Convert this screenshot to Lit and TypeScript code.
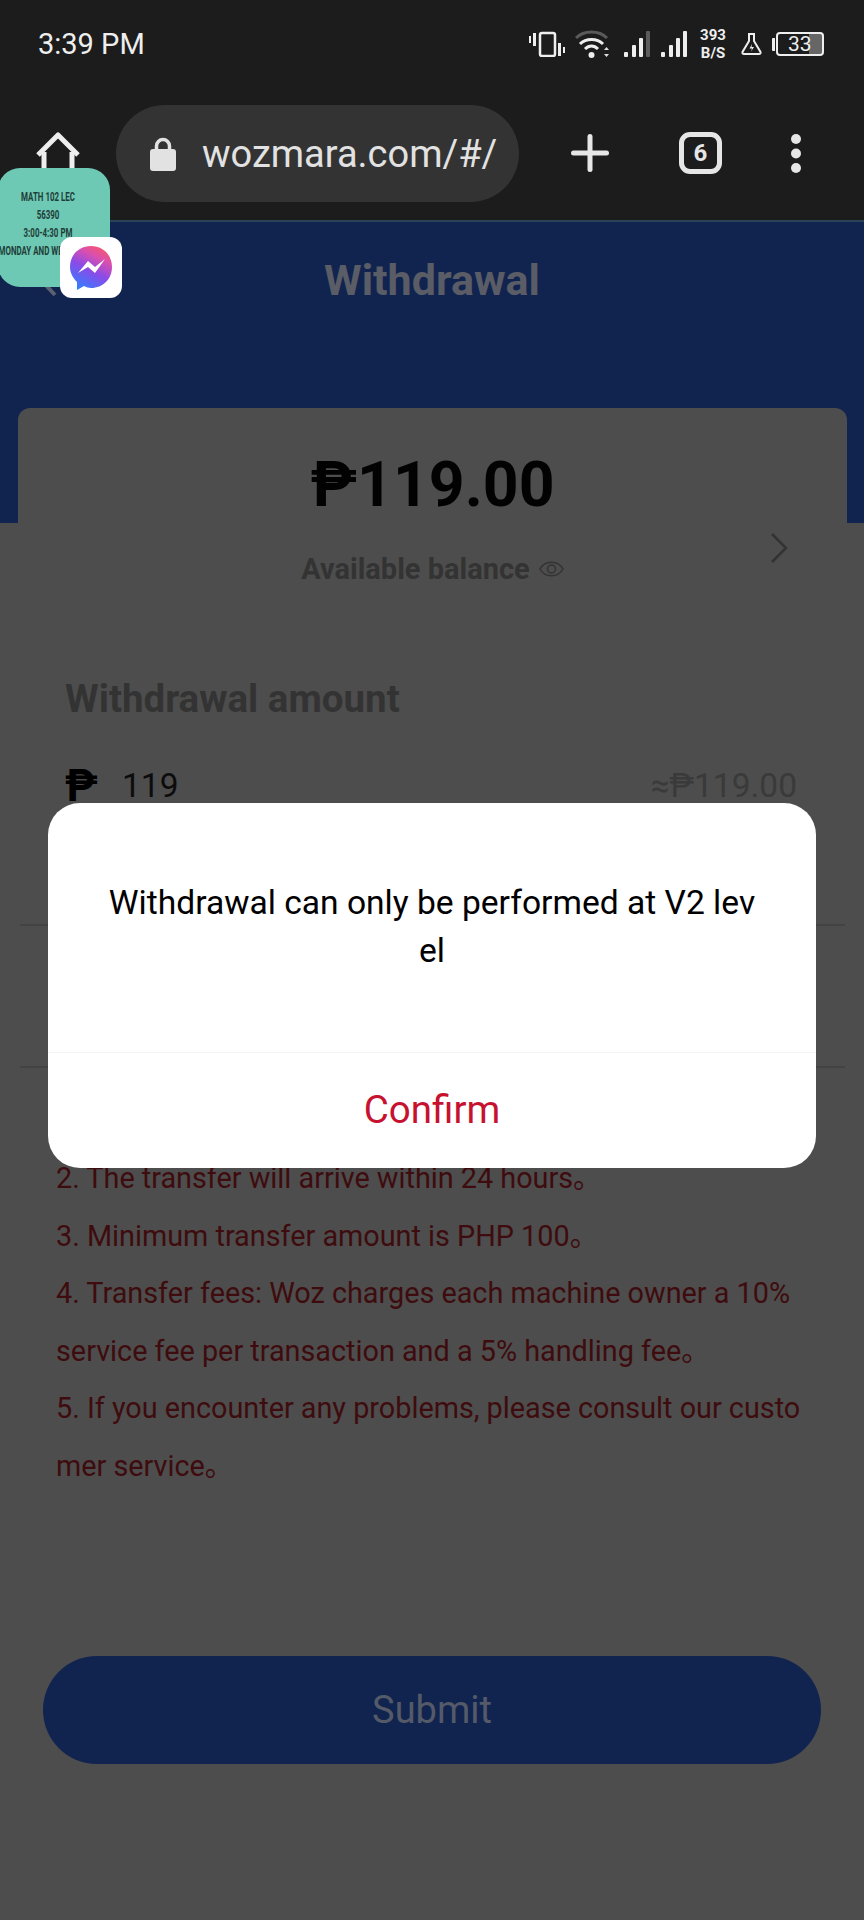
import { LitElement, html, css } from "lit";
import { customElement } from "lit/decorators.js";

const RULES = [
  "2. The transfer will arrive within 24 hours。",
  "3. Minimum transfer amount is PHP 100。",
  "4. Transfer fees: Woz charges each machine owner a 10% service fee per transaction and a 5% handling fee。",
  "5. If you encounter any problems, please consult our customer service。",
];

const signal = (lastBar: string) => html`
  <svg width="27" height="26" viewBox="0 0 27 26">
    <rect x="0" y="21" width="4" height="5" rx="1" fill="#eee"></rect>
    <rect x="8" y="14" width="4" height="12" rx="1" fill="#eee"></rect>
    <rect x="15" y="7" width="4" height="19" rx="1" fill="#eee"></rect>
    <rect x="22" y="0" width="4" height="26" rx="1" fill="${lastBar}"></rect>
  </svg>
`;

@customElement("app-root")
export class AppRoot extends LitElement {
  static styles = css`
    :host {
      display: block;
      width: 864px;
      height: 1920px;
      position: relative;
      overflow: hidden;
      background: #4d4d4d;
      font-family: Roboto, "Liberation Sans", "Noto Sans CJK JP", sans-serif;
    }

    svg {
      display: block;
      flex: none;
    }

    .chrome {
      height: 220px;
      background: #1c1c1c;
      border-bottom: 2px solid #2b4358;
    }

    .status {
      height: 88px;
      display: flex;
      align-items: center;
      padding: 0 40px 0 38px;
      color: #eee;
    }

    .time {
      font-size: 29px;
      line-height: 88px;
      flex: 1;
    }

    .speed {
      width: 26px;
      margin: 0 15px 0 12px;
      font-size: 15px;
      font-weight: 700;
      line-height: 18px;
      text-align: center;
      white-space: nowrap;
    }

    .status-icons {
      display: flex;
      align-items: center;
    }

    .gap-15 {
      width: 15px;
    }

    .gap-10 {
      width: 10px;
    }

    .wifi {
      margin-left: 10px;
    }

    .battery {
      display: flex;
      align-items: center;
      margin-left: 10px;
    }

    .battery-nub {
      width: 3px;
      height: 13px;
      background: #eee;
      border-radius: 1px 0 0 1px;
      margin-right: 1px;
    }

    .battery-body {
      width: 48px;
      height: 24px;
      box-sizing: border-box;
      border: 2px solid #eee;
      border-radius: 4px;
      font-size: 21px;
      line-height: 20px;
      padding-left: 10px;
      background: linear-gradient(to right, transparent 70%, #666 70%);
    }

    .toolbar {
      height: 132px;
      display: flex;
      align-items: flex-start;
    }

    .home {
      margin: 44px 0 0 36px;
    }

    .pill {
      width: 403px;
      height: 97px;
      margin: 17px 0 0 36px;
      box-sizing: border-box;
      padding-left: 34px;
      display: flex;
      align-items: center;
      gap: 26px;
      border-radius: 49px;
      background: #333333;
      color: #e2e2e2;
      font-size: 38px;
      white-space: nowrap;
    }

    .plus {
      margin: 46px 0 0 52px;
    }

    .tabs {
      width: 43px;
      height: 42px;
      margin: 44px 0 0 70px;
      box-sizing: border-box;
      border: 5px solid #e6e6e6;
      border-radius: 11px;
      color: #e6e6e6;
      font-size: 24px;
      font-weight: 700;
      line-height: 32px;
      text-align: center;
    }

    .dots {
      margin: 46px 0 0 69px;
    }

    .hero {
      height: 301px;
      box-sizing: border-box;
      padding-top: 35px;
      background: #112450;
      display: grid;
      grid-template-columns: 1fr auto 1fr;
      align-items: center;
      align-content: start;
      color: #5a5c66;
    }

    .back {
      margin-left: 38px;
    }

    .title {
      margin: 0;
      font-size: 43px;
      font-weight: 700;
      line-height: 46px;
    }

    /* the page sits under the dialog's dim layer, colours are the dimmed ones */
    .card {
      margin: -115px 17px 0 18px;
      padding-top: 41px;
      border-radius: 12px 12px 0 0;
      background: #4d4d4d;
      display: grid;
      grid-template-columns: 1fr auto 1fr;
      row-gap: 13px;
    }

    .total {
      grid-column: 2;
      color: #020202;
      font-size: 62.500px;
      font-weight: 700;
      line-height: 72px;
      text-align: center;
    }

    .balance {
      grid-column: 2;
      grid-row: 2;
      padding-top: 17px;
      display: flex;
      justify-content: center;
      align-items: center;
      gap: 9px;
      color: #333;
      font-size: 29px;
      font-weight: 700;
      line-height: 36px;
    }

    .more {
      grid-column: 3;
      grid-row: 2;
      justify-self: end;
      margin: -1px 59px 0 0;
    }

    .form {
      padding: 90px 67px 0 65px;
    }

    .form-title {
      margin: 0;
      color: #333;
      font-size: 38.500px;
      font-weight: 700;
      line-height: 44px;
    }

    .amount-row {
      margin-top: 43px;
      display: flex;
      align-items: center;
      font-size: 33.500px;
      line-height: 44px;
    }

    .peso {
      width: 57px;
      color: #000;
      font-size: 44px;
      font-weight: 700;
    }

    .value {
      flex: 1;
      color: #0c0c0c;
    }

    .approx {
      color: #3a3a3a;
    }

    .rule {
      height: 140px;
      margin: 116px 19px 0 20px;
      border-top: 2px solid #434343;
      border-bottom: 2px solid #434343;
    }

    .notes {
      margin: 82px 56px 0 56px;
      color: #3e0c0e;
      font-size: 28.800px;
      line-height: 57.600px;
      word-break: break-all;
    }

    .notes p {
      margin: 0;
    }

    .submit {
      height: 108px;
      margin: 160px 43px 0 43px;
      border-radius: 54px;
      background: #112450;
      color: #545a68;
      font-size: 38px;
      line-height: 108px;
      text-align: center;
    }

    .dialog {
      position: absolute;
      left: 48px;
      top: 803px;
      width: 768px;
      height: 365px;
      border-radius: 32px;
      background: #fff;
      display: flex;
      flex-direction: column;
    }

    .message {
      height: 250px;
      box-sizing: border-box;
      padding: 76px 56px 0;
      color: #000;
      font-size: 33.600px;
      line-height: 48px;
      text-align: center;
      word-break: break-all;
      border-bottom: 1px solid #f3f3f3;
    }

    .confirm {
      flex: 1;
      display: flex;
      align-items: center;
      justify-content: center;
      padding-bottom: 2px;
      color: #c6122f;
      font-size: 38.500px;
    }

    .note-bubble {
      position: absolute;
      left: -2px;
      top: 168px;
      width: 112px;
      height: 119px;
      box-sizing: border-box;
      padding: 20px 12px 0 0;
      border-radius: 22px;
      overflow: hidden;
      background: #6ec9b4;
      color: #1f3d38;
      font-size: 12px;
      font-weight: 700;
      line-height: 18px;
      text-align: center;
      white-space: nowrap;
    }

    .note-bubble div {
      display: flex;
      justify-content: center;
      transform: scaleX(0.66);
    }

    .messenger {
      position: absolute;
      left: 60px;
      top: 237px;
      width: 62px;
      height: 61px;
      border-radius: 12px;
      background: #fff;
      display: flex;
      align-items: center;
      justify-content: center;
    }
  `;

  render() {
    return html`
      <div class="chrome">
        <div class="status">
          <div class="time">3:39 PM</div>
          <div class="status-icons">
            <svg width="36" height="26" viewBox="0 0 36 26" fill="none">
              <rect x="0" y="5" width="2" height="7" fill="#eee"></rect>
              <rect x="4" y="2" width="3" height="13" fill="#eee"></rect>
              <rect x="11" y="2" width="15" height="23" rx="2" stroke="#eee" stroke-width="2.500"></rect>
              <rect x="29" y="12" width="3" height="13" fill="#eee"></rect>
              <rect x="34" y="16" width="2" height="6" fill="#eee"></rect>
            </svg>
            <svg class="wifi" width="34" height="28" viewBox="0 0 34 28" fill="none">
              <path d="M1 8 C9 0 24 0 32 8" stroke="#5a5a5a" stroke-width="3"></path>
              <path d="M5 14 C11 8 22 8 28 14" stroke="#eee" stroke-width="3"></path>
              <path d="M10 19 C14 15 19 15 23 19" stroke="#eee" stroke-width="3"></path>
              <circle cx="16.500" cy="25" r="3" fill="#eee"></circle>
              <path d="M29 20 l2.500 -3 l2.500 3 z M29 24 l2.500 3 l2.500 -3 z" fill="#ddd"></path>
            </svg>
            <span class="gap-15"></span>
            ${signal("#5c5c5c")}
            <span class="gap-10"></span>
            ${signal("#eee")}
          </div>
          <div class="speed">393<br />B/S</div>
          <svg width="21" height="22" viewBox="0 0 21 22" fill="none">
            <path d="M7 1 H14 M8 1 V8 L1.500 19 Q1 21 3 21 H18 Q20 21 19.500 19 L13 8 V1" stroke="#eee" stroke-width="2"></path>
            <path d="M11 11 L8.500 15.500 H11 L10 18.500 L13 14 H10.500 Z" fill="#eee"></path>
          </svg>
          <div class="battery">
            <div class="battery-nub"></div>
            <div class="battery-body">33</div>
          </div>
        </div>
        <div class="toolbar">
          <svg class="home" width="44" height="44" viewBox="0 0 44 44" fill="none">
            <path d="M2 23 L22 3 L42 23" stroke="#eee" stroke-width="5" stroke-linejoin="round"></path>
            <path d="M8 20 V44 M36 20 V44" stroke="#eee" stroke-width="5"></path>
          </svg>
          <div class="pill">
            <svg width="26" height="34" viewBox="0 0 26 34" fill="none">
              <path d="M6.500 15 V9 a6.500 6.500 0 0 1 13 0 V15" stroke="#e2e2e2" stroke-width="3.500"></path>
              <rect x="0" y="12" width="26" height="22" rx="3" fill="#e2e2e2"></rect>
            </svg>
            <span>wozmara.com/#/</span>
          </div>
          <svg class="plus" width="38" height="38" viewBox="0 0 38 38">
            <rect x="16.500" y="0" width="5" height="38" rx="2.500" fill="#e6e6e6"></rect>
            <rect x="0" y="16.500" width="38" height="5" rx="2.500" fill="#e6e6e6"></rect>
          </svg>
          <div class="tabs">6</div>
          <svg class="dots" width="10" height="39" viewBox="0 0 10 39">
            <circle cx="5" cy="5" r="5" fill="#e6e6e6"></circle>
            <circle cx="5" cy="19.500" r="5" fill="#e6e6e6"></circle>
            <circle cx="5" cy="34" r="5" fill="#e6e6e6"></circle>
          </svg>
        </div>
      </div>

      <div class="hero">
        <svg class="back" width="20" height="34" viewBox="0 0 20 34" fill="none">
          <path d="M17 2 L3 17 L17 32" stroke="#5b6071" stroke-width="4"></path>
        </svg>
        <h1 class="title">Withdrawal</h1>
      </div>

      <div class="card">
        <div class="total">₱119.00</div>
        <div class="balance">
          <span>Available balance</span>
          <svg width="25" height="20" viewBox="0 0 25 20" fill="none">
            <path d="M1 10 C6 1 19 1 24 10 C19 19 6 19 1 10 Z" stroke="#333" stroke-width="1.500"></path>
            <circle cx="12.500" cy="10" r="4" stroke="#333" stroke-width="1.500"></circle>
          </svg>
        </div>
        <svg class="more" width="18" height="30" viewBox="0 0 18 30" fill="none">
          <path d="M2 1 L16 15 L2 29" stroke="#333" stroke-width="2.500"></path>
        </svg>
      </div>

      <div class="form">
        <h2 class="form-title">Withdrawal amount</h2>
        <div class="amount-row">
          <span class="peso">₱</span>
          <span class="value">119</span>
          <span class="approx">≈₱119.00</span>
        </div>
      </div>
      <div class="rule"></div>
      <div class="notes">${RULES.map((r) => html`<p>${r}</p>`)}</div>
      <div class="submit">Submit</div>

      <div class="dialog">
        <div class="message">Withdrawal can only be performed at V2 level</div>
        <div class="confirm">Confirm</div>
      </div>

      <div class="note-bubble">
        <div>MATH 102 LEC</div>
        <div>56390</div>
        <div>3:00-4:30 PM</div>
        <div>MONDAY AND WEDNESDAY</div>
      </div>
      <div class="messenger">
        <svg width="44" height="46" viewBox="0 0 44 46">
          <defs>
            <linearGradient id="msg" x1="0.250" y1="1" x2="0.750" y2="0">
              <stop offset="0" stop-color="#2f80ff"></stop>
              <stop offset="0.450" stop-color="#8a4be8"></stop>
              <stop offset="0.750" stop-color="#d84fb0"></stop>
              <stop offset="1" stop-color="#f8566a"></stop>
            </linearGradient>
          </defs>
          <path d="M22 1 C10 1 1 10 1 22 C1 28 4 33 8 37 V45 L15 41 C17 42 20 43 22 43 C34 43 43 34 43 22 C43 10 34 1 22 1 Z" fill="url(#msg)"></path>
          <path d="M9 28 L19 16 L26 22 L36 14 L26 28 L19 22 Z" fill="#fff"></path>
        </svg>
      </div>
    `;
  }
}
